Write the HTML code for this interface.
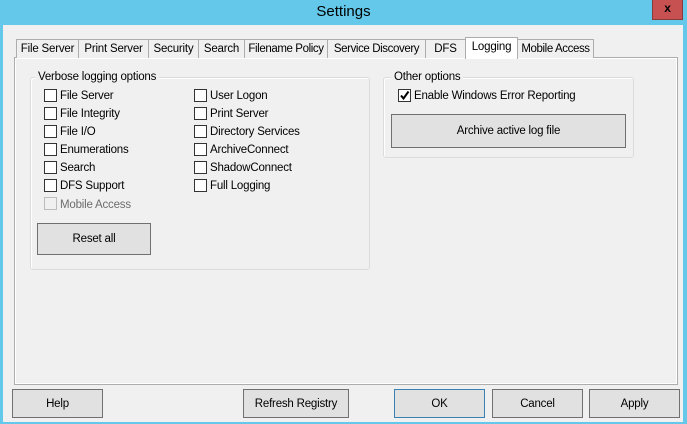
<!DOCTYPE html><html><head><style>
*{margin:0;padding:0;box-sizing:border-box}
body{width:687px;height:424px;background:#63c8e9;font-family:"Liberation Sans",sans-serif;font-size:11.5px;letter-spacing:-0.2px;color:#000;position:relative;overflow:hidden}
.a{position:absolute}
.title{left:0;top:0;width:687px;height:25px;text-align:center;font-size:15px;letter-spacing:0;line-height:23px;color:#000}
.close{left:652px;top:0;width:31px;height:20px;background:#c75050;border:1px solid #8a3a3a;border-top:none;color:#000;font-weight:bold;text-align:center;font-size:12px;line-height:17px}
.client{left:3px;top:25px;width:680px;height:397px;background:#f0f0f0}
.tab{top:39px;height:19px;border:1px solid #adadad;border-bottom:none;background:#f0f0f0;text-align:center;line-height:19px;white-space:nowrap;overflow:hidden}
.panel{left:14px;top:57px;width:664px;height:328px;border:1px solid #adadad;background:#f0f0f0;box-shadow:inset 0 0 0 1px #fff}
.grp{border:1px solid #dcdcdc;border-radius:3px;box-shadow:inset 1px 1px 0 #fff}
.lbl{background:#f0f0f0;padding:0 3px;line-height:15px}
.cb{width:13px;height:13px;border:1px solid #333;background:#fff}
.ct{line-height:15px;white-space:nowrap}
.btn{border:1px solid #707070;background:#e1e1e1;text-align:center}
</style></head><body>
<div class="a title">Settings</div>
<div class="a close">x</div>
<div class="a client"></div>
<div class="a panel"></div>
<div class="a tab" style="left:16px;width:63px">File Server</div>
<div class="a tab" style="left:78px;width:71px">Print Server</div>
<div class="a tab" style="left:148px;width:51px">Security</div>
<div class="a tab" style="left:198px;width:47px">Search</div>
<div class="a tab" style="left:244px;width:84px;letter-spacing:-0.4px">Filename Policy</div>
<div class="a tab" style="left:327px;width:99px;letter-spacing:-0.4px">Service Discovery</div>
<div class="a tab" style="left:425px;width:41px">DFS</div>
<div class="a tab" style="left:517px;width:77px;letter-spacing:-0.4px">Mobile Access</div>
<div class="a tab" style="left:465px;top:37px;width:53px;height:22px;background:#fff;line-height:19px">Logging</div>

<div class="a grp" style="left:30px;top:77px;width:340px;height:193px"></div>
<div class="a lbl" style="left:35px;top:70px">Verbose logging options</div>
<div class="a grp" style="left:383px;top:77px;width:251px;height:81px"></div>
<div class="a lbl" style="left:391px;top:70px">Other options</div>

<div class="a cb" style="left:44px;top:89px"></div><div class="a ct" style="left:60px;top:89px">File Server</div>
<div class="a cb" style="left:44px;top:107px"></div><div class="a ct" style="left:60px;top:107px">File Integrity</div>
<div class="a cb" style="left:44px;top:125px"></div><div class="a ct" style="left:60px;top:125px">File I/O</div>
<div class="a cb" style="left:44px;top:143px"></div><div class="a ct" style="left:60px;top:143px">Enumerations</div>
<div class="a cb" style="left:44px;top:161px"></div><div class="a ct" style="left:60px;top:161px">Search</div>
<div class="a cb" style="left:44px;top:179px"></div><div class="a ct" style="left:60px;top:179px">DFS Support</div>
<div class="a cb" style="left:44px;top:197px;border-color:#bcbcbc;background:#f0f0f0"></div><div class="a ct" style="left:60px;top:198px;color:#6d6d6d">Mobile Access</div>

<div class="a cb" style="left:194px;top:89px"></div><div class="a ct" style="left:210px;top:89px">User Logon</div>
<div class="a cb" style="left:194px;top:107px"></div><div class="a ct" style="left:210px;top:107px">Print Server</div>
<div class="a cb" style="left:194px;top:125px"></div><div class="a ct" style="left:210px;top:125px">Directory Services</div>
<div class="a cb" style="left:194px;top:143px"></div><div class="a ct" style="left:210px;top:143px">ArchiveConnect</div>
<div class="a cb" style="left:194px;top:161px"></div><div class="a ct" style="left:210px;top:161px">ShadowConnect</div>
<div class="a cb" style="left:194px;top:179px"></div><div class="a ct" style="left:210px;top:179px">Full Logging</div>

<div class="a cb" style="left:398px;top:89px"><svg width="11" height="11" style="position:absolute;left:0;top:0"><path d="M2 5.5 L4.5 8.5 L9.5 1.5" stroke="#000" stroke-width="2" fill="none"/></svg></div>
<div class="a ct" style="left:414px;top:89px">Enable Windows Error Reporting</div>

<div class="a btn" style="left:391px;top:114px;width:235px;height:34px;line-height:33px">Archive active log file</div>
<div class="a btn" style="left:37px;top:223px;width:114px;height:32px;line-height:31px">Reset all</div>

<div class="a btn" style="left:12px;top:389px;width:91px;height:29px;line-height:28px">Help</div>
<div class="a btn" style="left:243px;top:389px;width:106px;height:29px;line-height:28px">Refresh Registry</div>
<div class="a btn" style="left:394px;top:389px;width:91px;height:29px;line-height:28px;border-color:#3c7fb1">OK</div>
<div class="a btn" style="left:492px;top:389px;width:91px;height:29px;line-height:28px">Cancel</div>
<div class="a btn" style="left:589px;top:389px;width:91px;height:29px;line-height:28px">Apply</div>
</body></html>
